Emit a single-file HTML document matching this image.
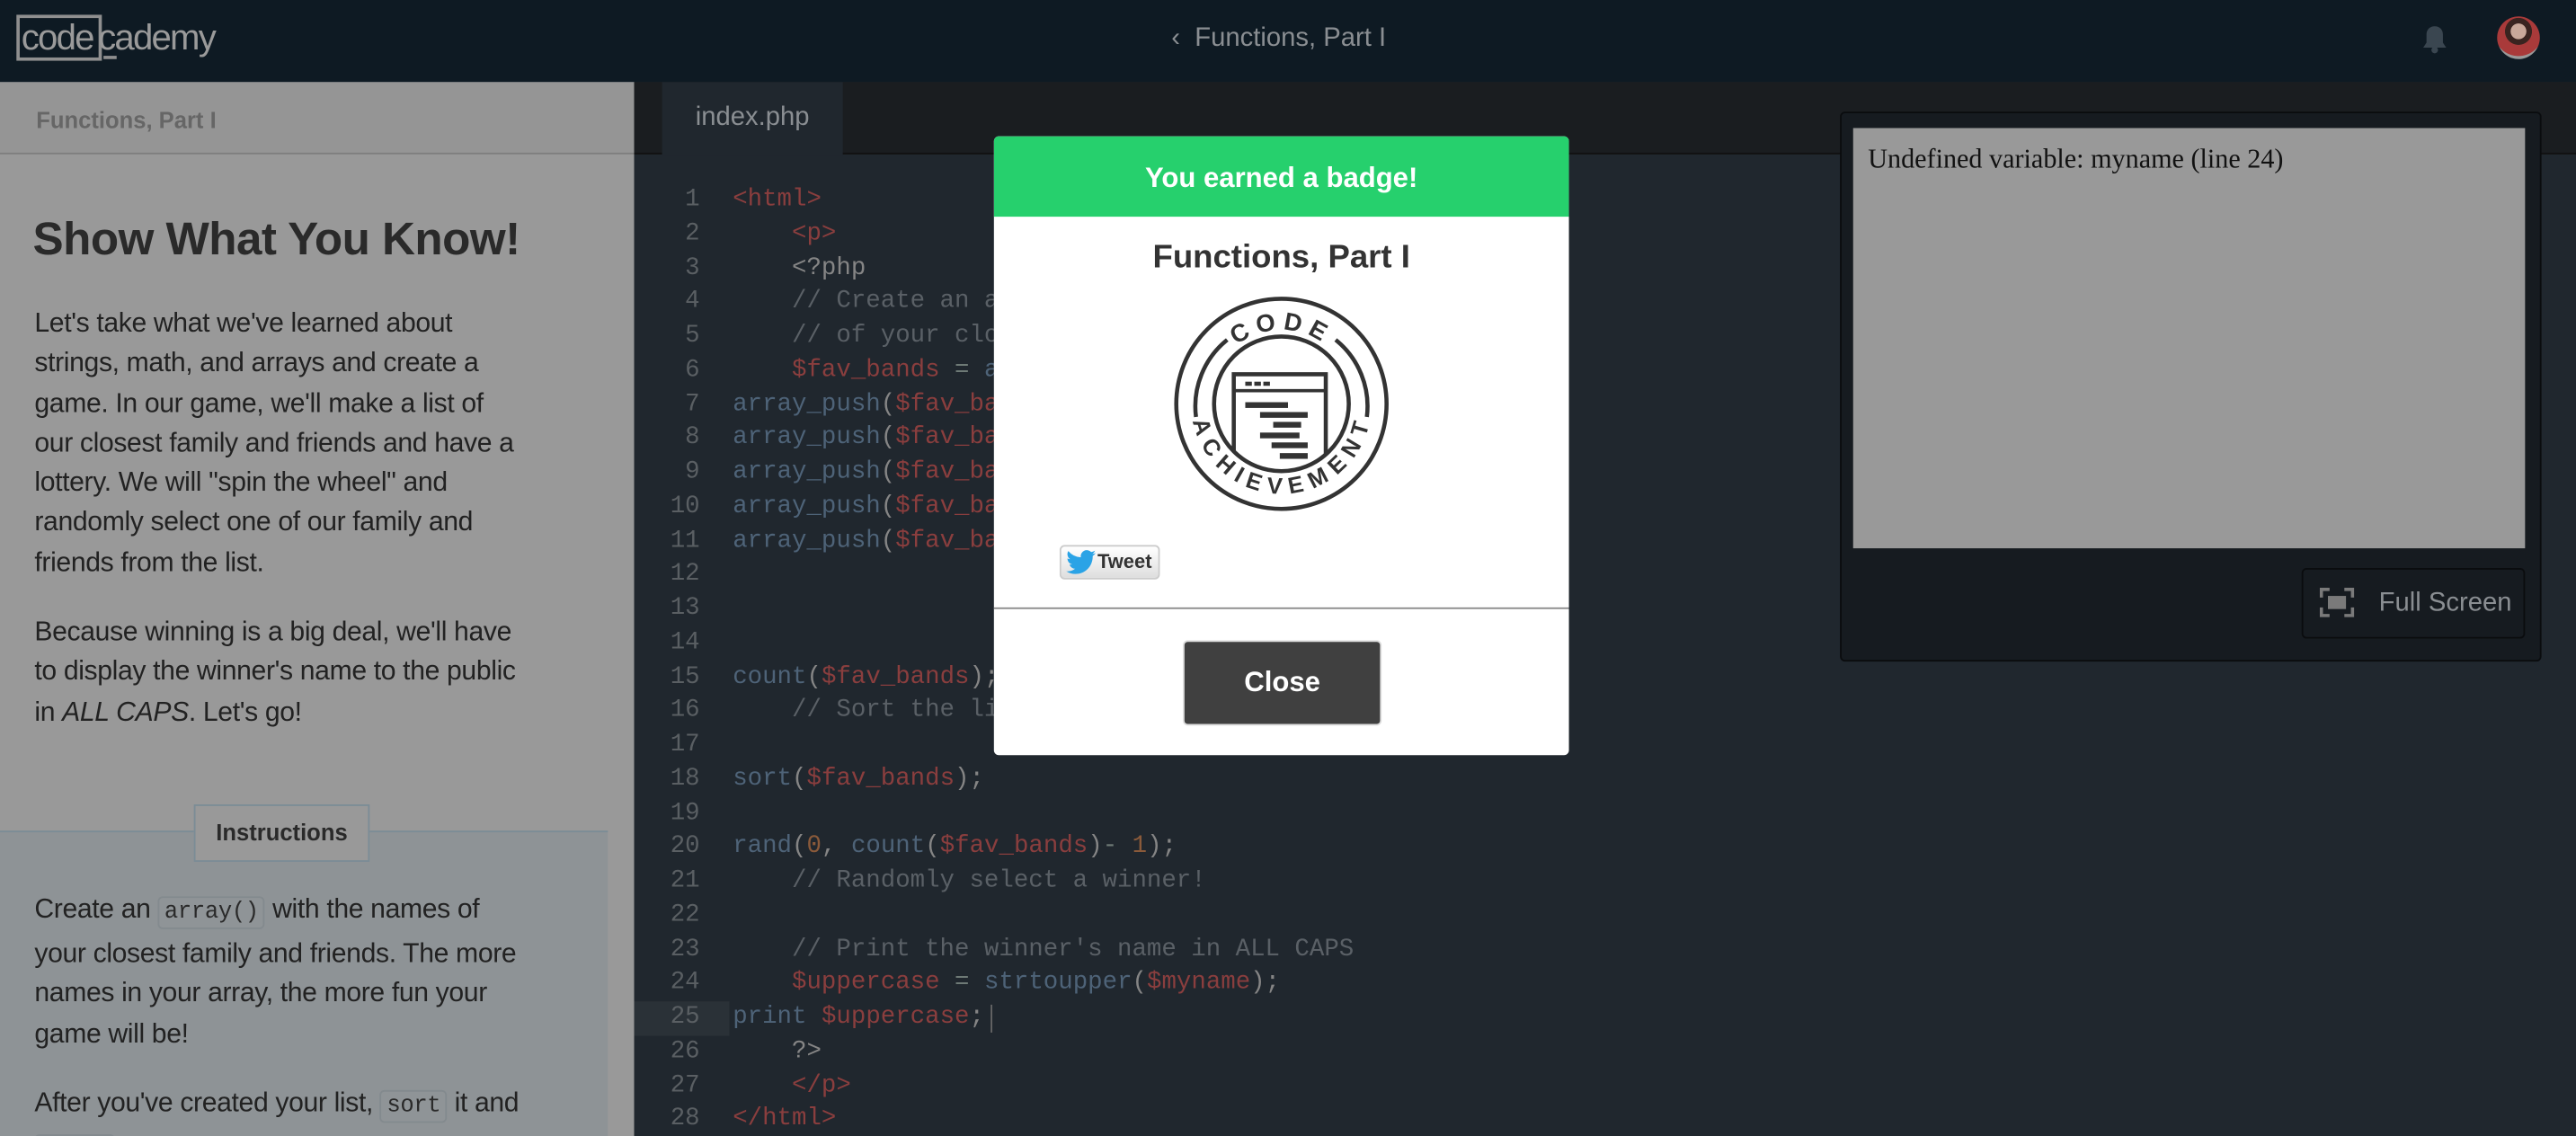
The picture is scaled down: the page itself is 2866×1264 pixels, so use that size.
<!DOCTYPE html>
<html><head><meta charset="utf-8"><style>
*{margin:0;padding:0;box-sizing:border-box}
html,body{width:2866px;height:1264px;overflow:hidden;background:#20272e}
#w{position:absolute;left:0;top:0;width:1568px;height:692px;transform:scale(1.8278,1.8266);transform-origin:0 0;font-family:"Liberation Sans",sans-serif;overflow:hidden}
.a{position:absolute}
#top{left:0;top:0;width:1568px;height:50px;background:#0e1a23}
#left{left:0;top:50px;width:386px;height:642px;background:#999}
.lp{font-size:16.5px;line-height:24.3px;color:#222;letter-spacing:-0.2px}
code.k{font-family:"Liberation Mono",monospace;font-size:14px;background:#8f9497;border:1px solid #838a8e;border-radius:3px;padding:1px 3px;color:#2a2a2a}
#ed{left:386px;top:50px;width:1182px;height:642px;background:#20272e}
.code{font-family:"Liberation Mono",monospace;font-size:15px;line-height:20.75px;white-space:pre}
.ln{color:#5a5f63;text-align:right;width:40px;left:386px}
.t{color:#8a3e3e}.f{color:#4e6378}.c{color:#5a6066}.p{color:#858585}.n{color:#8a5a3a}.o{color:#6e7a76}
</style></head><body><div id="w">
<div id="top" class="a">
 <div class="a" style="left:10px;top:9px;width:52px;height:28px;border:2px solid #8f8f8f"></div>
 <div class="a" style="left:13px;top:10px;font-size:22px;color:#9a9a9a;letter-spacing:-1px">code<span style="margin-left:3px">cademy</span></div>
 <div class="a" style="left:63px;top:34px;width:8px;height:2px;background:#8f8f8f"></div>
 <div class="a" style="left:713px;top:15px;font-size:16px;color:#8a8e92">‹ &nbsp;Functions, Part I</div>
 <svg class="a" style="left:1474px;top:15px" width="16" height="18" viewBox="0 0 16 18"><path d="M8 1c-3 0-5 2-5 5v5l-2 3h14l-2-3V6c0-3-2-5-5-5z" fill="#3a4650"/><circle cx="8" cy="15.5" r="2" fill="#3a4650"/></svg>
 <div class="a" style="left:1520px;top:10px;width:26px;height:26px;border-radius:50%;background:radial-gradient(circle at 50% 35%,#c9a89a 0 22%,#3a2420 23% 38%,#a93a3a 39% 70%,#999 71%);"></div>
</div>
<div id="left" class="a">
 <div class="a" style="left:0;top:0;width:386px;height:44px;background:#959595;border-bottom:1px solid #7e7e7e"></div>
 <div class="a" style="left:22px;top:15px;font-size:14px;font-weight:bold;color:#666">Functions, Part I</div>
 <div class="a" style="left:20px;top:80px;font-size:28px;font-weight:bold;color:#2a2a2a;letter-spacing:-0.3px">Show What You Know!</div>
 <div class="a lp" style="left:21px;top:135px">Let's take what we've learned about<br>strings, math, and arrays and create a<br>game. In our game, we'll make a list of<br>our closest family and friends and have a<br>lottery. We will "spin the wheel" and<br>randomly select one of our family and<br>friends from the list.</div>
 <div class="a lp" style="left:21px;top:323px">Because winning is a big deal, we'll have<br>to display the winner's name to the public<br>in <i>ALL CAPS</i>. Let's go!</div>
 <div class="a" style="left:0;top:456px;width:370px;height:186px;background:#8e9396;border-top:1px solid #7b8c96"></div>
 <div class="a" style="left:118px;top:440px;width:107px;height:35px;background:#999;border:1px solid #7b8c96;font-size:14px;font-weight:bold;color:#2a2a2a;text-align:center;line-height:33px">Instructions</div>
 <div class="a lp" style="left:21px;top:492px;line-height:24.5px">Create an <code class="k">array()</code> with the names of<br>your closest family and friends. The more<br>names in your array, the more fun your<br>game will be!</div>
 <div class="a lp" style="left:21px;top:610px;line-height:24.5px">After you've created your list, <code class="k">sort</code> it and<br><code class="k">count</code> and make your game fun and walk</div>
</div>
<div id="ed" class="a">
 <div class="a" style="left:0;top:0;width:1182px;height:44px;background:#1a1d20;border-bottom:1px solid #111"></div>
 <div class="a" style="left:17px;top:0;width:110px;height:45px;background:#20272e;color:#8a8e92;font-size:16px;text-align:center;line-height:44px">index.php</div>
 <div class="a" style="left:0;top:560px;width:58px;height:21px;background:#2a3137"></div>
 <div class="a" style="left:217px;top:562px;width:1px;height:17px;background:#666"></div>
</div>
<div class="a code ln" style="top:112px">1
2
3
4
5
6
7
8
9
10
11
12
13
14
15
16
17
18
19
20
21
22
23
24
25
26
27
28</div>
<div class="a code" style="left:446px;top:112px"><span class="t">&lt;html&gt;</span>
    <span class="t">&lt;p&gt;</span>
    <span class="p">&lt;?php</span>
    <span class="c">// Create an array with the names</span>
    <span class="c">// of your closest family and friends</span>
    <span class="t">$fav_bands</span> <span class="o">=</span> <span class="f">array();</span>
<span class="f">array_push</span><span class="p">(</span><span class="t">$fav_bands</span><span class="p">, "A");</span>
<span class="f">array_push</span><span class="p">(</span><span class="t">$fav_bands</span><span class="p">, "B");</span>
<span class="f">array_push</span><span class="p">(</span><span class="t">$fav_bands</span><span class="p">, "C");</span>
<span class="f">array_push</span><span class="p">(</span><span class="t">$fav_bands</span><span class="p">, "D");</span>
<span class="f">array_push</span><span class="p">(</span><span class="t">$fav_bands</span><span class="p">, "E");</span>



<span class="f">count</span><span class="p">(</span><span class="t">$fav_bands</span><span class="p">);</span>
    <span class="c">// Sort the list</span>

<span class="f">sort</span><span class="p">(</span><span class="t">$fav_bands</span><span class="p">);</span>

<span class="f">rand</span><span class="p">(</span><span class="n">0</span><span class="p">,</span> <span class="f">count</span><span class="p">(</span><span class="t">$fav_bands</span><span class="p">)</span><span class="o">-</span> <span class="n">1</span><span class="p">);</span>
    <span class="c">// Randomly select a winner!</span>

    <span class="c">// Print the winner's name in ALL CAPS</span>
    <span class="t">$uppercase</span> <span class="o">=</span> <span class="f">strtoupper</span><span class="p">(</span><span class="t">$myname</span><span class="p">);</span>
<span class="f">print</span> <span class="t">$uppercase</span><span class="p">;</span>
    <span class="p">?&gt;</span>
    <span class="t">&lt;/p&gt;</span>
<span class="t">&lt;/html&gt;</span></div>
<div class="a" style="left:1120px;top:68px;width:427px;height:335px;background:#161b20;border:1px solid #0a0c0e;border-radius:3px"></div>
<div class="a" style="left:1128px;top:78px;width:409px;height:256px;background:#999;font-family:'Liberation Serif',serif;font-size:16.5px;color:#111;padding:9px 9px">Undefined variable: myname (line 24)</div>
<div class="a" style="left:1401px;top:346px;width:136px;height:43px;border:1px solid #0a0c0e;border-radius:3px;background:#161b20;color:#8a8e92;font-size:16px;line-height:41px;padding-left:46px">Full Screen</div>
<svg class="a" style="left:1412px;top:358px" width="21" height="18" viewBox="0 0 21 18"><path d="M1 6V1h5M15 1h5v5M20 12v5h-5M6 17H1v-5" fill="none" stroke="#7a7a7a" stroke-width="2"/><rect x="5" y="5" width="11" height="8" fill="#7a7a7a"/></svg>
<!-- modal -->
<div class="a" style="left:605px;top:83px;width:350px;height:377px;background:#fff;border-radius:3px;overflow:hidden">
 <div class="a" style="left:0;top:0;width:350px;height:49px;background:#26d06d;color:#fff;font-weight:bold;font-size:17px;text-align:center;line-height:51px">You earned a badge!</div>
 <div class="a" style="left:0;top:63px;width:350px;text-align:center;font-weight:bold;font-size:20px;color:#333">Functions, Part I</div>
 <svg class="a" style="left:108px;top:97px" width="134" height="134" viewBox="0 0 134 134">
  <defs><path id="tp" d="M22 66a45 45 0 0 1 90 0"/><path id="bp" d="M22 66a45 45 0 0 0 90 0"/>
  <clipPath id="cc"><circle cx="67" cy="66" r="40"/></clipPath></defs>
  <circle cx="67" cy="66" r="64" fill="none" stroke="#333" stroke-width="2.5"/>
  <path d="M34 27A52 52 0 0 0 15 74M100 27A52 52 0 0 1 119 74" fill="none" stroke="#333" stroke-width="2.5"/>
  <circle cx="67" cy="66" r="41" fill="none" stroke="#333" stroke-width="2.5"/>
  <text font-family="Liberation Sans,sans-serif" font-weight="bold" font-size="15" fill="#333" letter-spacing="4"><textPath href="#tp" startOffset="50%" text-anchor="middle">CODE</textPath></text>
  <text font-family="Liberation Sans,sans-serif" font-weight="bold" font-size="14" fill="#333" letter-spacing="2.2" dominant-baseline="hanging"><textPath href="#bp" startOffset="50%" text-anchor="middle">ACHIEVEMENT</textPath></text>
  <g clip-path="url(#cc)">
   <path d="M38 110V48h56V110" fill="none" stroke="#333" stroke-width="2.5"/>
   <line x1="38" y1="58" x2="94" y2="58" stroke="#333" stroke-width="2"/>
   <g fill="#333"><rect x="45" y="52.5" width="4" height="2.5"/><rect x="50.5" y="52.5" width="4" height="2.5"/><rect x="56" y="52.5" width="4" height="2.5"/>
   <rect x="45" y="65" width="26" height="3.5"/><rect x="54" y="71" width="29" height="3.5"/><rect x="62" y="77" width="17" height="3.5"/><rect x="54" y="83.5" width="24" height="3.5"/><rect x="61" y="89.5" width="22" height="3.5"/><rect x="66" y="96" width="17" height="3.5"/></g>
  </g>
 </svg>
 <div class="a" style="left:40px;top:249px;width:61px;height:21px;border:1px solid #ccc;border-radius:3px;background:linear-gradient(#fff,#dedede);font-size:12px;font-weight:bold;color:#333;line-height:19px;padding-left:22px">Tweet</div>
 <svg class="a" style="left:44px;top:252px" width="18" height="15" viewBox="0 0 24 20"><path d="M24 2.4c-.9.4-1.8.7-2.8.8 1-.6 1.8-1.6 2.2-2.7-1 .6-2 1-3.1 1.2A4.9 4.9 0 0 0 11.9 6 14 14 0 0 1 1.7.9a4.9 4.9 0 0 0 1.5 6.6c-.8 0-1.6-.3-2.2-.6 0 2.4 1.7 4.4 3.9 4.8-.7.2-1.5.2-2.2.1.6 2 2.4 3.4 4.6 3.4A9.9 9.9 0 0 1 0 17.3 14 14 0 0 0 7.5 19.5c9.1 0 14-7.5 14-14v-.6c1-.7 1.8-1.6 2.5-2.5z" fill="#2aa3e6"/></svg>
 <div class="a" style="left:0;top:287px;width:350px;height:1px;background:#888"></div>
 <div class="a" style="left:115px;top:307px;width:121px;height:52px;background:#404040;border:1px solid #ddd;border-radius:3px;color:#fff;font-weight:bold;font-size:17px;text-align:center;line-height:50px">Close</div>
</div>
</div></body></html>
